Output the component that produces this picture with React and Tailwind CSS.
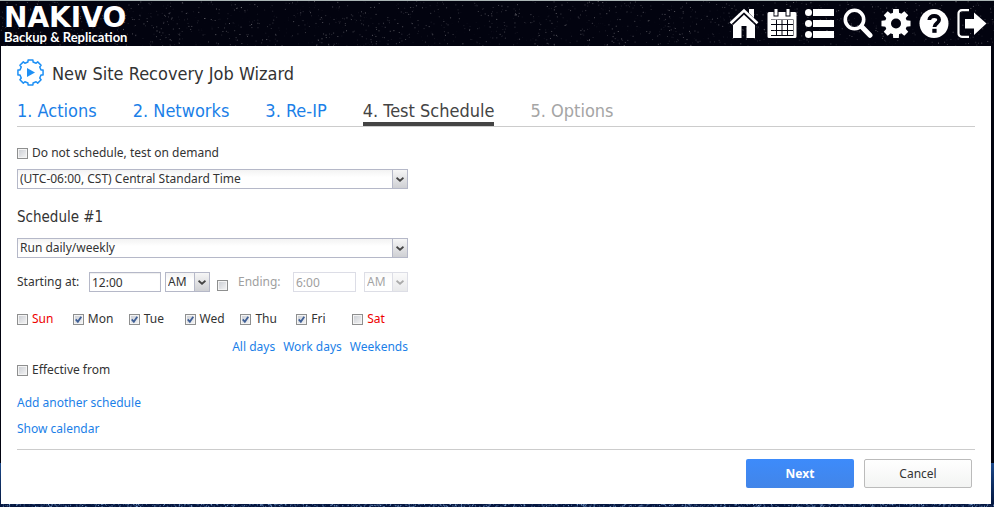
import React from 'react';

const TABS = [
    { label: '1. Actions', state: 'link' },
    { label: '2. Networks', state: 'link' },
    { label: '3. Re-IP', state: 'link' },
    { label: '4. Test Schedule', state: 'active' },
    { label: '5. Options', state: 'disabled' },
];

const DAYS = [
    { name: 'Sun', checked: false, weekend: true },
    { name: 'Mon', checked: true },
    { name: 'Tue', checked: true },
    { name: 'Wed', checked: true },
    { name: 'Thu', checked: true },
    { name: 'Fri', checked: true },
    { name: 'Sat', checked: false, weekend: true },
];

const TAB_STYLES = {
    link: 'border-transparent text-[#1b7fe8]',
    active: 'border-[#444444] text-[#444444]',
    disabled: 'border-transparent text-[#a5a5a5]',
};

// small seeded generator, so the sky is the same on every render
const makeStars = (count, seed) => {
    let s = seed;
    const next = () => {
        s = (s * 16807) % 2147483647;
        return s / 2147483647;
    };
    return Array.from({ length: count }, () => ({ x: next() * 100, y: next() * 100, o: next() }));
};

const SKY = makeStars(2200, 71);
const CITY = makeStars(1800, 1234);

const Stars = ({ stars, color, strength }) => (
    <svg className="h-full w-full" aria-hidden="true">
        {stars.map((star, i) => (
            <rect key={i} x={`${star.x}%`} y={`${star.y}%`} width="1" height="1" fill={color} opacity={star.o * star.o * strength} />
        ))}
    </svg>
);

const gearPoints = (cx, cy, outer, inner, teeth, wide, narrow) => {
    const points = [];
    for (let i = 0; i < teeth; i++) {
        const a = (i * 2 * Math.PI) / teeth - Math.PI / 2;
        [[inner, -wide], [outer, -narrow], [outer, narrow], [inner, wide]].forEach(([r, d]) => {
            points.push(`${(cx + r * Math.cos(a + d)).toFixed(2)},${(cy + r * Math.sin(a + d)).toFixed(2)}`);
        });
    }
    return points.join(' ');
};

const HomeIcon = () => (
    <svg viewBox="0 0 30 30" className="size-[30px]" fill="white">
        <path d="M20 1h5v9l-5-5z" />
        <path d="M1.5 15.2 15 2.6l13.5 12.6" fill="none" stroke="white" strokeWidth="2.600" />
        <path d="M15 6.800 26 17v13h-8.500V18h-5v12H4V17z" />
    </svg>
);

const CalendarIcon = () => (
    <svg viewBox="0 0 30 30" className="size-[30px]" fill="white">
        <path fillRule="evenodd" d="M2 4h4.500v4.500h5V4h7v4.500h5V4H28a1.500 1.500 0 0 1 1.500 1.500v23A1.500 1.500 0 0 1 28 30H2a1.500 1.500 0 0 1-1.500-1.500v-23A1.500 1.500 0 0 1 2 4zM4 11.500v16.500h22.500V11.500z" />
        <path d="M7.500 1h3v6.500h-3zM19.500 1h3v6.500h-3z" />
        <path d="M4 12h5v4H4zM10 12h4.500v4H10zM15.500 12H20v4h-4.500zM21 12h5v4h-5zM4 17h5v5H4zM10 17h4.500v5H10zM15.500 17H20v5h-4.500zM21 17h5v5h-5zM4 23h5v4H4zM10 23h4.500v4H10zM15.500 23H20v4h-4.500zM21 23h5v4h-5z" />
    </svg>
);

const ListIcon = () => (
    <svg viewBox="0 0 30 30" className="size-[30px]" fill="white">
        <circle cx="3.500" cy="4.500" r="3.500" />
        <circle cx="3.500" cy="15.500" r="3.500" />
        <circle cx="3.500" cy="26.500" r="3.500" />
        <path d="M8 1h21v7H8zM8 12h21v7H8zM8 23h21v7H8z" />
    </svg>
);

const SearchIcon = () => (
    <svg viewBox="0 0 30 30" className="size-[30px]" fill="none" stroke="white">
        <circle cx="11.500" cy="11.500" r="9.200" strokeWidth="3.600" />
        <path d="m18.500 18.500 8.500 8.800" strokeWidth="5" strokeLinecap="round" />
    </svg>
);

const GearIcon = () => (
    <svg viewBox="0 0 30 30" className="size-[30px]">
        <polygon points={gearPoints(15, 15.5, 14.8, 10.6, 8, 0.3, 0.19)} fill="white" />
        <circle cx="15" cy="15.500" r="11" fill="white" />
        <circle cx="15" cy="15.500" r="5" fill="#02030f" />
    </svg>
);

const HelpIcon = () => (
    <svg viewBox="0 0 30 30" className="size-[30px]">
        <circle cx="15" cy="15.500" r="14.500" fill="white" />
        <path d="M10.300 12c0-5.300 9.800-5.300 9.800-.3 0 3.500-4.600 3.600-4.600 7.300" fill="none" stroke="#02030f" strokeWidth="3.800" />
        <rect x="13.300" y="20.800" width="4.300" height="4" fill="#02030f" />
    </svg>
);

const ExitIcon = () => (
    <svg viewBox="0 0 30 30" className="size-[30px]">
        <path d="M12 2.200H5A3.500 3.500 0 0 0 1.500 6v19A3.500 3.500 0 0 0 5 28.800h7" fill="none" stroke="white" strokeWidth="2.200" />
        <path d="M8 11h9V4.500L29.500 15.500 17 27v-6.500H8z" fill="white" />
    </svg>
);

const TOOLS = [
    { label: 'Home', Icon: HomeIcon },
    { label: 'Calendar', Icon: CalendarIcon },
    { label: 'Activities', Icon: ListIcon },
    { label: 'Search', Icon: SearchIcon },
    { label: 'Settings', Icon: GearIcon },
    { label: 'Help', Icon: HelpIcon },
    { label: 'Log out', Icon: ExitIcon },
];

const WizardIcon = () => (
    <svg viewBox="0 0 27 27" className="size-[27px]" aria-hidden="true">
        <polygon points={gearPoints(13.5, 13.5, 12.8, 10.8, 8, 0.24, 0.19)} fill="none" stroke="#1e90f5" strokeWidth="1.500" strokeLinejoin="round" />
        <path d="M10 9v9l8-4.500z" fill="#1e90f5" />
    </svg>
);

const Checkbox = ({ id, ...props }) => (
    <span className="relative flex size-[11px] shrink-0">
        <input
            id={id}
            type="checkbox"
            className="peer size-[11px] appearance-none border border-[#8e8f8f] bg-linear-to-br from-[#c9ccd2] to-[#f6f6f6] shadow-[inset_0_0_0_1px_#f4f4f4]"
            {...props}
        />
        <svg viewBox="0 0 12 12" className="pointer-events-none absolute inset-0 hidden size-[11px] peer-checked:block" aria-hidden="true">
            <path d="m3 5.800 2.300 2.700L9 3" fill="none" stroke="#3f5f96" strokeWidth="2" />
        </svg>
    </span>
);

const Select = ({ label, options, className, disabled }) => (
    <span className={`relative flex h-5 ${disabled ? 'opacity-45' : ''} ${className}`}>
        <select
            aria-label={label}
            disabled={disabled}
            className="h-5 w-full appearance-none border border-[#b5b8c8] bg-linear-to-b from-[#f3f3f3] to-white to-40% pl-0.5 text-[#333333]"
        >
            {options.map((option) => (
                <option key={option}>{option}</option>
            ))}
        </select>
        <span className="pointer-events-none absolute inset-y-0 right-0 flex w-4 items-center justify-center border border-[#b5b8c8] bg-linear-to-b from-[#f6f6f6] to-[#cfd0d4]">
            <svg viewBox="0 0 8 5" className="h-[5px] w-2" aria-hidden="true">
                <path d="m.5.8 3.500 3 3.500-3" fill="none" stroke="#444444" strokeWidth="1.800" />
            </svg>
        </span>
    </span>
);

const Header = () => (
    <header className="relative flex h-[46px] items-start justify-between border-t border-[#aab5b5] pr-[7px] pl-1">
        <div className="absolute inset-0">
            <Stars stars={SKY} color="#c3bfc0" strength={0.5} />
        </div>
        <div className="relative pt-1 text-white">
            <div className="font-['DejaVu_Sans','Liberation_Sans',sans-serif] text-[28px] leading-[26px] font-bold">NAKIVO</div>
            <div className="font-['Lato','Liberation_Sans',sans-serif] text-[13px] leading-3 font-bold">Backup &amp; Replication</div>
        </div>
        <nav className="relative flex gap-2 pt-[7px]">
            {TOOLS.map(({ label, Icon }) => (
                <button key={label} type="button" aria-label={label}>
                    <Icon />
                </button>
            ))}
        </nav>
    </header>
);

const ScheduleForm = () => (
    <div className="max-w-[391px]">
        <div className="mt-[18px] flex items-center gap-1">
            <Checkbox id="on-demand" />
            <label htmlFor="on-demand">Do not schedule, test on demand</label>
        </div>
        <Select label="Time zone" options={['(UTC-06:00, CST) Central Standard Time']} className="mt-2" />

        <h2 className="mt-4 font-['DejaVu_Sans_Condensed','Noto_Sans',sans-serif] text-[15px] leading-6">Schedule #1</h2>
        <Select label="Schedule type" options={['Run daily/weekly']} className="mt-[9px]" />

        <div className="mt-3.5 flex items-center">
            <label htmlFor="start" className="w-[72px]">Starting at:</label>
            <input id="start" defaultValue="12:00" className="h-5 w-[72px] border border-[#b5b8c8] px-0.5 shadow-[inset_0_1px_1px_#eeeeee]" />
            <Select label="Start AM or PM" options={['AM', 'PM']} className="ml-1 w-[45px]" />
            <span className="ml-[7px] flex pt-1.5">
                <Checkbox id="use-end" aria-label="Set ending time" />
            </span>
            <label htmlFor="end" className="ml-2.5 flex-1 text-[#a0a0a0]">Ending:</label>
            <input id="end" defaultValue="6:00" disabled className="h-5 w-[63px] border border-[#dcdde6] px-0.5 text-[#a0a0a0]" />
            <Select label="End AM or PM" options={['AM', 'PM']} className="ml-2 w-11" disabled />
        </div>

        <div className="mt-[19px] grid grid-cols-7">
            {DAYS.map((day) => (
                <div key={day.name} className="flex items-center gap-1">
                    <Checkbox id={day.name} defaultChecked={day.checked} />
                    <label htmlFor={day.name} className={day.weekend ? 'text-[#ee0000]' : ''}>{day.name}</label>
                </div>
            ))}
        </div>
        <div className="mt-3 flex justify-end gap-2 text-[#1b7fe8]">
            <a href="#all">All days</a>
            <a href="#work">Work days</a>
            <a href="#weekends">Weekends</a>
        </div>

        <div className="mt-[7px] flex items-center gap-1">
            <Checkbox id="effective" />
            <label htmlFor="effective">Effective from</label>
        </div>
        <div className="mt-[17px] flex flex-col items-start gap-2.5 text-[#1b7fe8]">
            <a href="#add">Add another schedule</a>
            <a href="#calendar">Show calendar</a>
        </div>
    </div>
);

const App = () => (
    <div className="relative min-h-screen bg-[#02030f] font-['Noto_Sans','Liberation_Sans',sans-serif] text-xs leading-4 text-[#333333]">
        <div className="absolute inset-x-0 bottom-0 h-11 bg-linear-to-b from-[#1d4a8c] to-[#04143c]" />
        <div className="absolute inset-x-0 bottom-0 h-1">
            <Stars stars={CITY} color="#9cc4f5" strength={0.9} />
        </div>
        <Header />
        <main className="relative mr-[3px] mb-[3px] ml-px bg-white px-4 pt-3 pb-4">
            <div className="flex items-center gap-2">
                <WizardIcon />
                <h1 className="pt-1 font-['DejaVu_Sans_Condensed','Noto_Sans',sans-serif] text-lg leading-6">New Site Recovery Job Wizard</h1>
            </div>
            <nav className="mt-3.5 flex gap-9 border-b border-[#cccccc] font-['DejaVu_Sans_Condensed','Noto_Sans',sans-serif]">
                {TABS.map((tab) => (
                    <a key={tab.label} href="#tab" className={`border-b-4 text-lg leading-[22px] ${TAB_STYLES[tab.state]}`}>
                        {tab.label}
                    </a>
                ))}
            </nav>
            <ScheduleForm />
            <footer className="mt-3 flex justify-end gap-2.5 border-t border-[#cccccc] pt-[9px] pr-[3px]">
                <button type="button" className="h-[29px] w-[108px] rounded-xs bg-linear-to-b from-[#3d8bfb] to-[#4285e8] font-bold text-white">Next</button>
                <button type="button" className="h-[29px] w-[108px] rounded-xs border border-[#bbbbbb] bg-linear-to-b from-white to-[#f3f4f3]">Cancel</button>
            </footer>
        </main>
    </div>
);

export default App;
